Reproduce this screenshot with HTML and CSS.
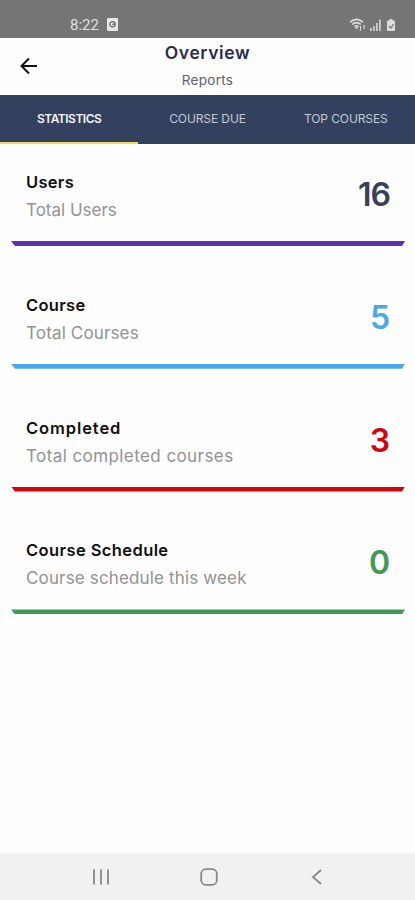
FILE: index.html
```
<!doctype html>
<html lang="en">
  <head>
    <meta charset="utf-8">
    <meta name="viewport" content="width=device-width, initial-scale=1">
    <title>Overview</title>
    <link rel="stylesheet" href="styles.css">
  </head>
  <body>
    <div class="statusbar">
      <span class="time">8:22</span>
      <svg class="app" width="11" height="13" viewBox="0 0 11 13">
        <rect width="11" height="13" rx="1" fill="#e8e8e8"/>
        <circle cx="5.5" cy="6.2" r="2.6" fill="none" stroke="#666" stroke-width="1.3"/>
        <path d="M5 6.2h3" stroke="#666"/>
      </svg>
      <svg class="signals" width="48" height="14" viewBox="0 0 48 14">
        <g fill="none" stroke="#ddd" stroke-width="1.6">
          <path d="M1 4.2Q7.5 -1.5 14 4.2M3.2 6.4Q7.5 2.8 11.8 6.4M5.4 8.6Q7.5 7 9.6 8.6"/>
          <path d="M11.5 8v4.5M15 7v4" stroke-width="1.2"/>
        </g>
        <path d="M6 9h3l-1.500 2.500z" fill="#ddd"/>
        <path d="M21 10h1.800v3H21zM24 8h1.800v5H24zM27 5h1.800v8H27zM30 1.500h1.800V13H30z" fill="#ccc"/>
        <path d="M39 2.500h1.500V1h3v1.500H45q1 0 1 1V12q0 1-1 1h-6q-1 0-1-1V3.500q0-1 1-1z" fill="#ddd"/>
        <path d="M40 8l2 2 2.500-4" fill="none" stroke="#777" stroke-width="1.2"/>
      </svg>
    </div>

    <header class="header">
      <svg class="back" width="18" height="18" viewBox="0 0 18 18">
        <path d="M17 9H2M9 1.500L1.500 9 9 16.500" fill="none" stroke="#111" stroke-width="2"/>
      </svg>
      <h1>Overview</h1>
      <p>Reports</p>
    </header>

    <nav class="tabs">
      <a class="tab active"><span class="label-statistics">STATISTICS</span></a>
      <a class="tab"><span class="label-due">COURSE DUE</span></a>
      <a class="tab"><span class="label-top">TOP COURSES</span></a>
    </nav>

    <main class="cards">
      <section class="card users">
        <div>
          <h2>Users</h2>
          <p>Total Users</p>
        </div>
        <strong>16</strong>
      </section>
      <section class="card course">
        <div>
          <h2>Course</h2>
          <p>Total Courses</p>
        </div>
        <strong>5</strong>
      </section>
      <section class="card completed">
        <div>
          <h2>Completed</h2>
          <p>Total completed courses</p>
        </div>
        <strong>3</strong>
      </section>
      <section class="card schedule">
        <div>
          <h2>Course Schedule</h2>
          <p>Course schedule this week</p>
        </div>
        <strong>0</strong>
      </section>
    </main>

    <footer class="navbar">
      <svg width="18" height="18" viewBox="0 0 18 18">
        <path d="M2 1.500v15M9 1.500v15M16 1.500v15" stroke="#888" stroke-width="1.8"/>
      </svg>
      <svg width="18" height="18" viewBox="0 0 18 18">
        <rect x="1.2" y="1.2" width="15.6" height="15.6" rx="4.5" fill="none" stroke="#888" stroke-width="1.8"/>
      </svg>
      <svg width="18" height="18" viewBox="0 0 18 18">
        <path d="M13 2L5 9l8 7" fill="none" stroke="#888" stroke-width="1.8"/>
      </svg>
    </footer>
  </body>
</html>
```

FILE: styles.css
```
* {
  box-sizing: border-box;
}
body {
  margin: 0;
  height: 900px;
  display: flex;
  flex-direction: column;
  background: #fefefe;
  font-family: Inter, "Liberation Sans", sans-serif;
}
h1, h2, p {
  margin: 0;
}
.statusbar {
  height: 38px;
  padding: 11px 18px 0 70px;
  display: flex;
  align-items: center;
  background: #757575;
}
.time {
  color: #e0e0e0;
  font: 15px/20px Roboto, sans-serif;
}
.app {
  margin-left: 8px;
}
.signals {
  margin-left: auto;
}
.header {
  height: 57px;
  display: grid;
  grid-template-columns: 60px 1fr 60px;
  grid-template-rows: 29px 26px;
  align-items: center;
  text-align: center;
}
.back {
  grid-row: 1 / 3;
  margin-left: 20px;
}
.header h1 {
  grid-column: 2;
  color: #262b50;
  font-size: 17.5px;
  font-weight: 600;
  letter-spacing: 0.6px;
}
.header p {
  grid-column: 2;
  color: #5c5f6c;
  font-size: 13.5px;
  letter-spacing: 0.3px;
}
.tabs {
  height: 49px;
  display: flex;
  background: #34415e;
}
.tab {
  flex: 1;
  padding-bottom: 2px;
  display: flex;
  align-items: center;
  justify-content: center;
  color: #c3c8d2;
  font-size: 12px;
  white-space: nowrap;
}
.active {
  padding-bottom: 0;
  border-bottom: 2px solid #efdc60;
  color: #f2f4f8;
  font-weight: 600;
}
.label-statistics {
  letter-spacing: -0.5px;
}
.label-due, .label-top {
  letter-spacing: -0.1px;
}
.cards {
  flex: 1;
  padding: 10px 10px 0 11px;
}
.card {
  height: 92px;
  margin-bottom: 30.8px;
  display: grid;
  grid-template-columns: 1fr auto;
  grid-template-rows: 87px 5px;
}
.card::after {
  content: "";
  grid-column: 1 / 3;
  background: currentColor;
  clip-path: polygon(0 0, 100% 0, calc(100% - 3px) 100%, 4px 100%);
}
.card div {
  padding: 14px 0 0 15px;
}
.card h2 {
  color: #111;
  font-size: 16.5px;
  font-weight: 600;
  line-height: 28px;
  letter-spacing: 0.3px;
}
.card p {
  color: #929292;
  font-size: 17px;
  line-height: 28px;
  letter-spacing: 0.15px;
}
.card strong {
  margin: 21px 15px 0 0;
  font-size: 32px;
  font-weight: 600;
  line-height: 40px;
}
.users {
  color: #5e32ae;
}
.users p {
  letter-spacing: 0;
}
.users strong {
  color: #34415e;
  letter-spacing: -1px;
}
.course {
  color: #4ca6ec;
}
.completed {
  color: #d2050f;
}
.completed h2 {
  letter-spacing: 0.9px;
}
.completed p {
  letter-spacing: 0.42px;
}
.schedule {
  color: #409a56;
}
.schedule h2 {
  letter-spacing: 0.4px;
}
.navbar {
  height: 47px;
  padding: 0 89px 0 92px;
  display: flex;
  align-items: center;
  justify-content: space-between;
  background: #f1f1f1;
}
```
